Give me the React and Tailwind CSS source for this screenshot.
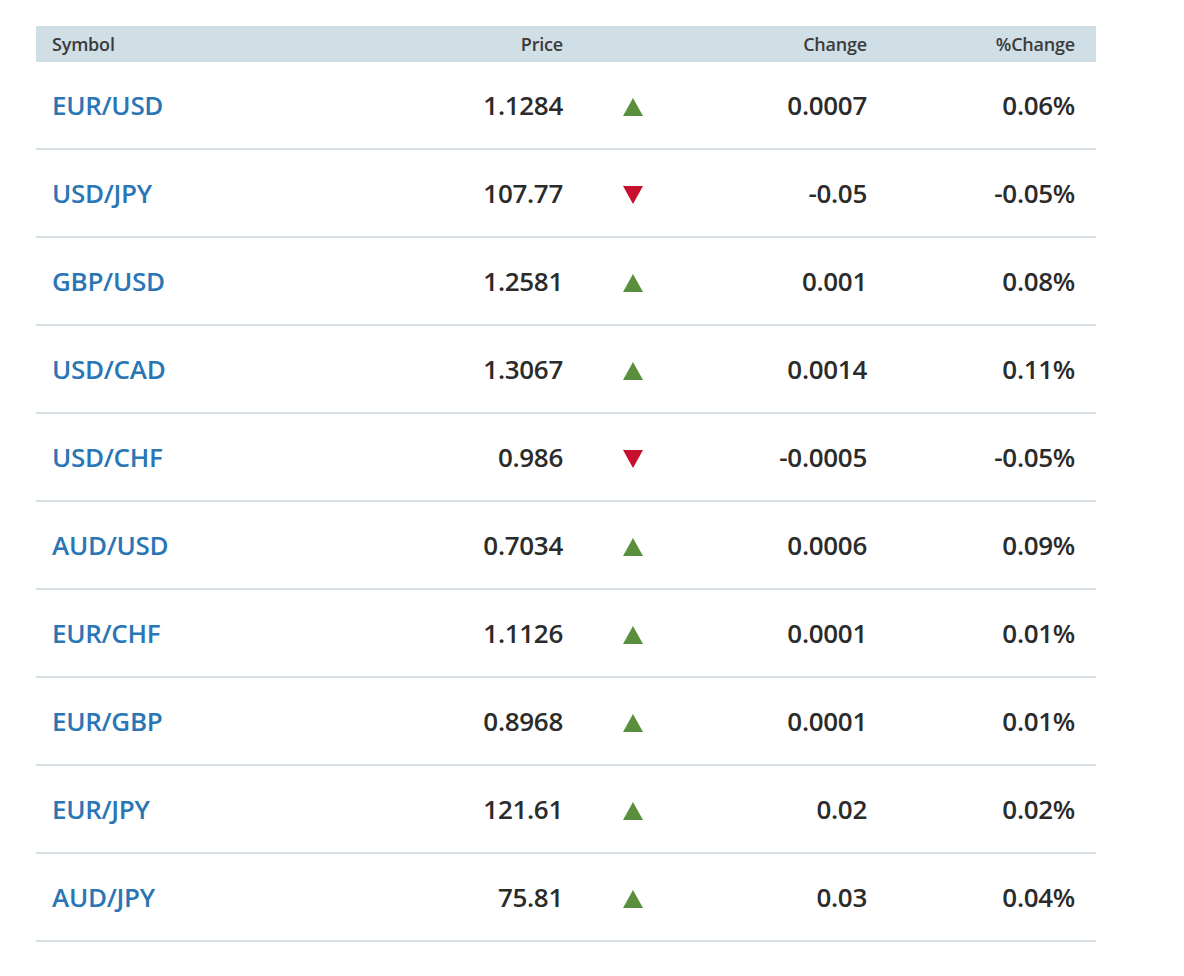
const rows = [
  ['EUR/USD', '1.1284', true, '0.0007', '0.06%'],
  ['USD/JPY', '107.77', false, '-0.05', '-0.05%'],
  ['GBP/USD', '1.2581', true, '0.001', '0.08%'],
  ['USD/CAD', '1.3067', true, '0.0014', '0.11%'],
  ['USD/CHF', '0.986', false, '-0.0005', '-0.05%'],
  ['AUD/USD', '0.7034', true, '0.0006', '0.09%'],
  ['EUR/CHF', '1.1126', true, '0.0001', '0.01%'],
  ['EUR/GBP', '0.8968', true, '0.0001', '0.01%'],
  ['EUR/JPY', '121.61', true, '0.02', '0.02%'],
  ['AUD/JPY', '75.81', true, '0.03', '0.04%'],
];

const cols = 'grid grid-cols-[311px_200px_140px_164px_208px] pl-4 pr-[21px] items-center';

export default function App() {
  return (
    <div className="bg-white min-h-[976px] pt-[26px] pl-9" style={{ fontFamily: '"Open Sans", Lato, sans-serif' }}>
      <div className="w-[1060px]">
        <div className={`${cols} h-9 bg-[#d0dee6] text-[18px] font-semibold text-[#3b3b3b] tracking-[-0.2px]`}>
          <div>Symbol</div>
          <div className="text-right">Price</div>
          <div />
          <div className="text-right">Change</div>
          <div className="text-right">%Change</div>
        </div>
        {rows.map(([sym, price, up, chg, pct]) => (
          <div key={sym} className={`${cols} h-[88px] border-b-2 border-[#d6e0e4] text-[26px] font-semibold text-[#2b2b2b] tracking-[-0.3px]`}>
            <div className="text-[#2a76b4]">{sym}</div>
            <div className="text-right">{price}</div>
            <div className="flex justify-center pt-1">
              {up ? (
                <svg width="20" height="18" viewBox="0 0 20 18"><path d="M10 0L20 18H0Z" fill="#5a8f3d" /></svg>
              ) : (
                <svg width="20" height="18" viewBox="0 0 20 18"><path d="M0 0H20L10 18Z" fill="#c8102e" /></svg>
              )}
            </div>
            <div className="text-right">{chg}</div>
            <div className="text-right">{pct}</div>
          </div>
        ))}
      </div>
    </div>
  );
}
